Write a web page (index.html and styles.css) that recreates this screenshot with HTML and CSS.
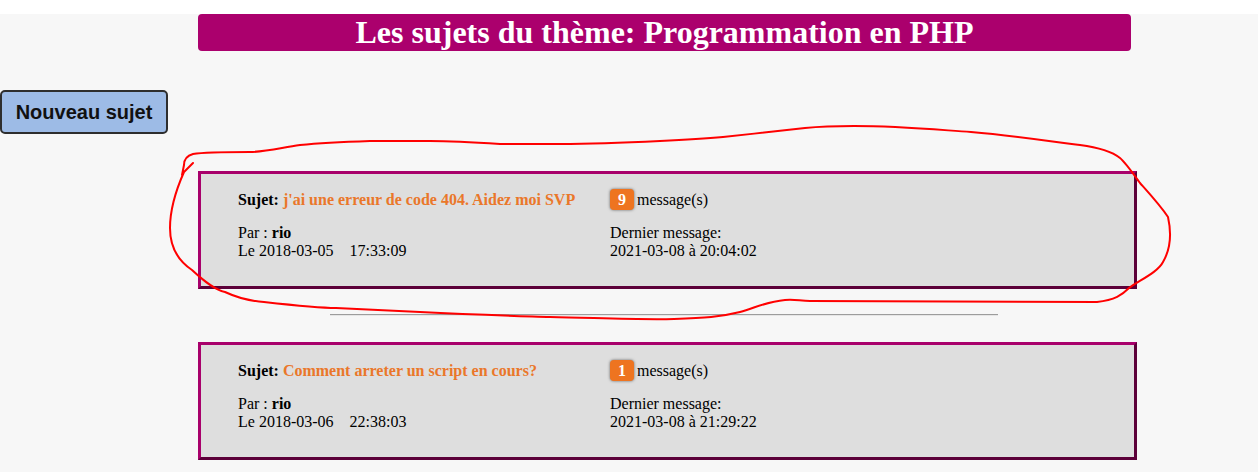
FILE: index.html
```html
<!DOCTYPE html>
<html lang="fr">
<head>
<meta charset="utf-8">
<title>Les sujets du thème</title>
<link rel="stylesheet" href="styles.css">
</head>
<body>
<div class="topstrip"></div>
<main class="page">
  <h1 class="theme-title">Les sujets du thème: Programmation en PHP</h1>
  <button class="new-topic">Nouveau sujet</button>

  <section class="topic">
    <div class="cell subject"><b>Sujet:</b> <a class="topic-link">j'ai une erreur de code 404. Aidez moi SVP</a></div>
    <div class="cell count"><span class="badge">9</span>message(s)</div>
    <div class="cell meta">Par : <b>rio</b><br>Le 2018-03-05&nbsp;&nbsp;&nbsp;&nbsp;17:33:09</div>
    <div class="cell meta">Dernier message:<br>2021-03-08 à 20:04:02</div>
  </section>

  <hr class="sep">

  <section class="topic">
    <div class="cell subject"><b>Sujet:</b> <a class="topic-link">Comment arreter un script en cours?</a></div>
    <div class="cell count"><span class="badge">1</span>message(s)</div>
    <div class="cell meta">Par : <b>rio</b><br>Le 2018-03-06&nbsp;&nbsp;&nbsp;&nbsp;22:38:03</div>
    <div class="cell meta">Dernier message:<br>2021-03-08 à 21:29:22</div>
  </section>
</main>

<svg class="annotation" width="1258" height="472" viewBox="0 0 1258 472" xmlns="http://www.w3.org/2000/svg">
  <path d="M193,163 L184,172 C176,190 170,210 170,228 C170,250 180,262 192,270 C205,282 215,290 225,292 C240,299 250,301 264,302 C300,306 320,308 336,308 L420,312 C480,315 520,316 550,317 C600,318 640,320 674,319 C705,318 720,317 740,312 C755,308 765,302 785,300 C795,299 800,301 810,301 L1097,302 C1115,300 1122,295 1129,288 C1140,280 1158,272 1163,262 C1170,250 1172,235 1168,217 C1160,205 1148,192 1140,183 C1132,172 1125,162 1120,158 C1110,150 1095,147 1080,145 C1060,143 1020,136 971,132 C940,130 900,126 854,126 C830,126 815,127 805,128 C780,131 750,134 723,137 C700,139 680,140 660,141 C620,143 580,144 560,144 L500,144 C470,142 450,141 430,141 L370,141 C340,142 320,143 300,145 C280,148 265,152 250,152 C230,152 205,152 193,154 C186,156 184,160 184,165 L182,175" fill="none" stroke="#ff0000" stroke-width="2" stroke-linecap="round" stroke-linejoin="round"/>
</svg>
</body>
</html>
```

FILE: styles.css
```css
html, body {
  margin: 0;
  padding: 0;
}

body {
  position: relative;
  width: 1258px;
  height: 472px;
  overflow: hidden;
  background: #f7f7f7;
  font-family: "Liberation Serif", "Times New Roman", serif;
  color: #000;
}

.topstrip {
  height: 14px;
  background: #ffffff;
}

.page {
  display: flex;
  flex-direction: column;
  align-items: flex-start;
}

.theme-title {
  margin: 0 0 0 198px;
  width: 933px;
  height: 37px;
  line-height: 37px;
  background: #ab006d;
  border-radius: 4px;
  color: #ffffff;
  font-family: "Liberation Serif", "Times New Roman", serif;
  font-size: 32px;
  font-weight: bold;
  text-align: center;
}

.new-topic {
  margin: 39px 0 0 0;
  width: 168px;
  height: 44px;
  padding: 0;
  background: #9dbbe6;
  border: 2px solid #2e2e2e;
  border-radius: 5px;
  font-family: "Liberation Sans", Arial, sans-serif;
  font-size: 20px;
  font-weight: bold;
  color: #111;
}

.topic {
  box-sizing: border-box;
  margin: 37px 0 0 198px;
  width: 939px;
  height: 118px;
  padding: 15px 20px 0 37px;
  background: #dedede;
  border: 3px solid;
  border-color: #a8006b #5c0039 #5c0039 #a8006b;
  display: grid;
  grid-template-columns: 372px 1fr;
  grid-template-rows: 21px auto;
  row-gap: 14px;
  font-size: 16px;
  line-height: 18px;
}

.topic + .sep + .topic {
  margin-top: 26px;
}

.cell {
  display: flex;
  align-items: center;
}

.cell.meta {
  display: block;
}

.subject b {
  margin-right: 4px;
}

.topic-link {
  color: #ea772a;
  font-weight: bold;
  text-decoration: none;
}

.badge {
  display: inline-block;
  box-sizing: border-box;
  width: 24px;
  height: 21px;
  line-height: 21px;
  margin-right: 3px;
  text-align: center;
  background: #ee7420;
  color: #fff;
  font-weight: bold;
  border-radius: 4px;
  box-shadow: 0 0 3px rgba(0, 0, 0, 0.55);
}

.sep {
  margin: 25px 0 0 330px;
  width: 668px;
  height: 0;
  border: 0;
  border-top: 1px solid #9d9d9d;
  border-bottom: 1px solid #e6e6e6;
}

.annotation {
  position: absolute;
  left: 0;
  top: 0;
  pointer-events: none;
}
```
